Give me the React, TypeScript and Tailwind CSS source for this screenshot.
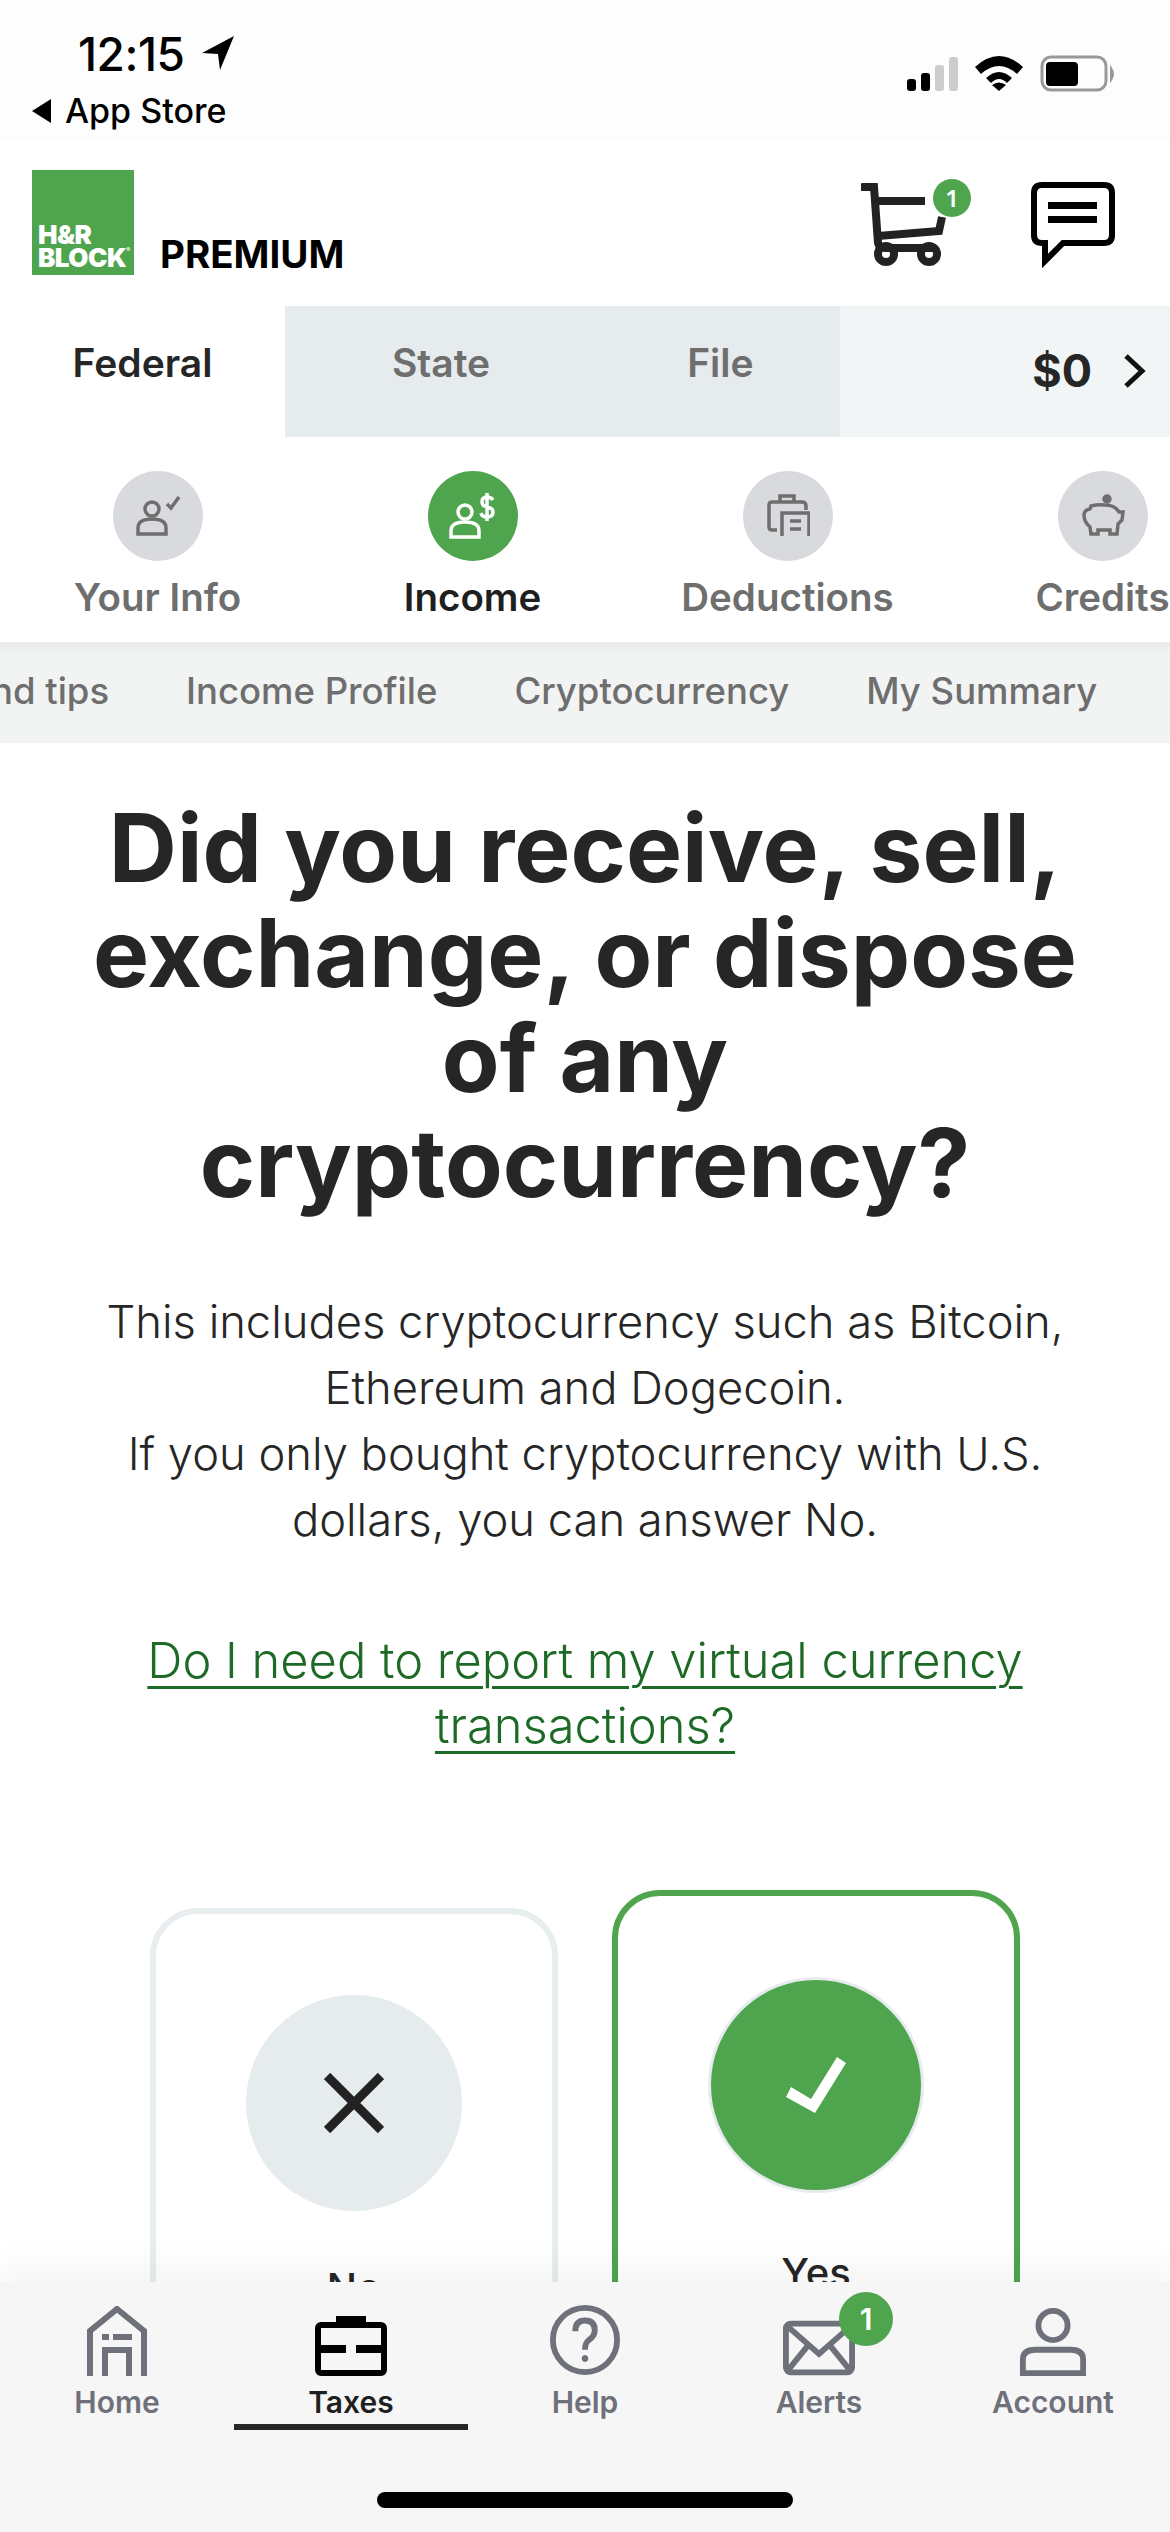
import { ReactNode } from 'react';

const Badge = ({ className }: { className: string }) => (
  <span className={`absolute flex items-center justify-center rounded-full bg-[#4ea54d] text-white font-semibold ${className}`}>1</span>
);

const StatusBar = () => (
  <div className="h-[140px] bg-[#fdfdfd] relative flex justify-between font-['Inter',sans-serif] text-black">
    <div className="pl-[30px] pt-[28px]">
      <div className="flex items-center pl-[48px] h-[52px]">
        <span className="text-[46px] leading-[52px] font-medium tracking-[-0.5px]">12:15</span>
        <svg width="34" height="36" viewBox="0 0 34 36" className="ml-[17px] -mt-[2px]">
          <path d="M33 1 L1 18 L17 19 L19 35 Z" fill="#000" />
        </svg>
      </div>
      <div className="flex items-center h-[36px] mt-[13px]">
        <svg width="22" height="24" viewBox="0 0 22 24">
          <path d="M21 0 V24 L2 12 Z" fill="#000" />
        </svg>
        <span className="ml-[13px] text-[34px] leading-[36px] font-medium">App Store</span>
      </div>
    </div>
    <div className="pt-[55px] pr-[53px]">
      <svg width="210" height="40" viewBox="0 0 210 40">
        <rect x="0" y="24" width="9" height="12" rx="3" fill="#000" />
        <rect x="14" y="18" width="9" height="18" rx="3" fill="#000" />
        <rect x="28" y="10" width="9" height="26" rx="3" fill="#ccc" />
        <rect x="42" y="2" width="9" height="34" rx="3" fill="#ccc" />
        <path d="M68 12 Q92 -10 116 12 L110 19 Q92 3 74 19 Z" fill="#000" />
        <path d="M79 23 Q92 11 105 23 L100 28 Q92 20 84 28 Z" fill="#000" />
        <path d="M85 30 Q92 25 99 30 L92 36 Z" fill="#000" />
        <rect x="135" y="2" width="64" height="33" rx="9" fill="none" stroke="#999" strokeWidth="3" />
        <rect x="139" y="7" width="32" height="24" rx="4" fill="#000" />
        <path d="M204 13 Q208 19 204 25 Z" fill="#999" stroke="#999" strokeWidth="2" />
      </svg>
    </div>
  </div>
);

const Header = () => (
  <div className="h-[166px] flex justify-between bg-white">
    <div className="flex items-end pl-[32px] pb-[31px]">
      <div className="w-[102px] h-[105px] bg-[#4ea54d] flex flex-col justify-end pl-[6px] pb-[6px] font-['Inter',sans-serif] font-black text-white text-[26px] leading-[23px] tracking-[-0.5px]">
        <span>H&amp;R</span>
        <span className="flex items-start">
          BLOCK<span className="text-[6px] leading-[8px]">®</span>
        </span>
      </div>
      <span className="ml-[26px] mb-[2px] font-['Inter',sans-serif] font-bold text-[38.5px] leading-[38px] text-black">PREMIUM</span>
    </div>
    <div className="flex pt-[41px] pr-[55px]">
      <div className="relative w-[92px] h-[90px] mr-[78px]">
        <svg width="92" height="90" viewBox="0 0 92 90" fill="none" stroke="#222" strokeWidth="8">
          <path d="M2 6 H13 L17 62 Q18 67 24 67 H72" strokeLinecap="round" />
          <path d="M15 20 H64" />
          <path d="M17 55 L78 50 L81 36" />
          <circle cx="25" cy="73" r="8" />
          <circle cx="68" cy="73" r="8" />
        </svg>
        <Badge className="-top-[2px] left-[72px] w-[38px] h-[38px] text-[24px]" />
      </div>
      <svg width="84" height="86" viewBox="0 0 84 86" fill="none" className="mt-[1px]">
        <path d="M11 3 H73 Q81 3 81 11 V53 Q81 61 73 61 H32 L14 79 V61 H11 Q3 61 3 53 V11 Q3 3 11 3 Z" stroke="#000" strokeWidth="6" />
        <rect x="17" y="20" width="49" height="7" fill="#000" />
        <rect x="17" y="34" width="49" height="7" fill="#000" />
      </svg>
    </div>
  </div>
);

const TopTabs = () => (
  <div className="h-[131px] flex font-['Inter',sans-serif] font-semibold text-[39px] leading-[54px]">
    <div className="w-[285px] bg-white flex justify-center pt-[30px] text-[#262626]">Federal</div>
    <div className="w-[555px] bg-[#e6ebed] flex pt-[30px] text-[#6e6e6e]">
      <span className="ml-[107px]">State</span>
      <span className="ml-[197px]">File</span>
    </div>
    <div className="flex-1 bg-[#f2f5f6] flex items-center justify-end pr-[24px] pb-[2px] text-[#262626] text-[45px] font-bold">
      <span>$0</span>
      <svg width="24" height="36" viewBox="0 0 24 36" className="ml-[30px]" fill="none" stroke="#111" strokeWidth="5">
        <path d="M4 3 L20 18 L4 33" />
      </svg>
    </div>
  </div>
);

const Step = ({ label, active, icon }: { label: string; active?: boolean; icon: ReactNode }) => (
  <div className="w-[315px] shrink-0 flex flex-col items-center">
    <div className={`w-[90px] h-[90px] rounded-full flex items-center justify-center ${active ? 'bg-[#4ea54d]' : 'bg-[#d8dade]'}`}>{icon}</div>
    <span className={`mt-[13px] whitespace-nowrap text-[38.5px] leading-[46px] font-semibold ${active ? 'text-[#1f1f1f]' : 'text-[#6e6e6e]'}`}>{label}</span>
  </div>
);

const Steps = () => (
  <div className="h-[205px] pt-[34px] overflow-hidden flex font-['Inter',sans-serif] bg-white">
    <Step
      label="Your Info"
      icon={
        <svg width="46" height="44" viewBox="0 0 46 44" fill="none" stroke="#6e6e6e" strokeWidth="3.5">
          <circle cx="17" cy="15" r="7" />
          <path d="M3 40 V34 Q3 25 17 25 Q31 25 31 34 V40 Z" />
          <path d="M32 10 L36 14 L44 3" />
        </svg>
      }
    />
    <Step
      label="Income"
      active
      icon={
        <svg width="48" height="46" viewBox="0 0 48 46" fill="none" stroke="#fff" strokeWidth="3.5">
          <circle cx="16" cy="19" r="7" />
          <path d="M2 44 V38 Q2 29 16 29 Q30 29 30 38 V44 Z" />
          <path d="M44 7 Q42 4 38 4 Q33 4 33 9 Q33 13 38 14 Q44 15 44 19 Q44 24 38 24 Q33 24 32 20 M38 0 V28" />
        </svg>
      }
    />
    <Step
      label="Deductions"
      icon={
        <svg width="44" height="44" viewBox="0 0 44 44" fill="none" stroke="#6e6e6e" strokeWidth="3.5">
          <path d="M14 8 V2 H28 V8 M11 36 H6 Q3 36 3 33 V11 Q3 8 6 8 H36 Q40 8 40 12 V16" />
          <path d="M16 42 V19 H43 V42" />
          <path d="M24 27 H35 M24 35 H35" />
        </svg>
      }
    />
    <Step
      label="Credits"
      icon={
        <svg width="44" height="44" viewBox="0 0 44 44" fill="none" stroke="#6e6e6e" strokeWidth="3.5">
          <circle cx="26" cy="5" r="3" fill="#6e6e6e" />
          <path d="M10 12 Q18 10 24 11 Q34 11 38 18 L42 18 L41 26 L37 30 L36 40 H29 V36 H17 V40 H10 L9 33 Q3 28 3 21 Q3 16 9 15 Z" />
        </svg>
      }
    />
  </div>
);

const SubNav = () => (
  <div className="h-[101px] bg-gradient-to-b from-[#e9ebeb] to-[#f2f4f4] to-[12%] flex items-center gap-[77px] overflow-hidden font-['Inter',sans-serif] font-medium text-[36.5px] text-[#6e6e6e] whitespace-nowrap pb-[2px]">
    <span className="-ml-[9px]">nd tips</span>
    <span>Income Profile</span>
    <span>Cryptocurrency</span>
    <span>My Summary</span>
  </div>
);

const Question = () => (
  <div className="font-['Inter',sans-serif] text-center text-[#262626]">
    <h1 className="mt-[53px] px-[80px] text-[94.3px] leading-[105px] font-bold">
      Did you receive, sell, exchange, or dispose of any cryptocurrency?
    </h1>
    <p className="mt-[73px] text-[45.3px] leading-[66px] font-light px-[60px]">
      This includes cryptocurrency such as Bitcoin,
      <br />
      Ethereum and Dogecoin.
      <br />
      If you only bought cryptocurrency with U.S.
      <br />
      dollars, you can answer No.
    </p>
    <p className="mt-[75px] text-[48.8px] leading-[65px] font-light text-[#1d6a26] underline underline-offset-[8px] decoration-[3px]">
      Do I need to report my virtual currency
      <br />
      transactions?
    </p>
  </div>
);

const Cards = () => (
  <div className="mt-[132px] flex justify-center gap-[54px] font-['Inter',sans-serif] text-[40px] text-[#262626]">
    <div className="mt-[18px] w-[408px] h-[420px] rounded-[48px] border-[6px] border-[#e8edef] flex flex-col items-center pt-[81px]">
      <div className="w-[216px] h-[216px] rounded-full bg-[#e6ebed] flex items-center justify-center">
        <svg width="60" height="60" viewBox="0 0 60 60" stroke="#222" strokeWidth="9">
          <path d="M3 3 L57 57 M57 3 L3 57" />
        </svg>
      </div>
      <span className="mt-[47px] font-medium">No</span>
    </div>
    <div className="w-[408px] h-[438px] rounded-[48px] border-[6px] border-[#4ea54d] flex flex-col items-center pt-[81px]">
      <div className="w-[216px] h-[216px] rounded-full bg-[#4ea54d] border-[3px] border-[#e6ebed] flex items-center justify-center">
        <svg width="60" height="56" viewBox="0 0 60 56" fill="#fff">
          <path d="M51 0 L60 6 L29 56 L0 40 L5 30 L25 42 Z" />
        </svg>
      </div>
      <span className="mt-[50px] font-medium">Yes</span>
    </div>
  </div>
);

const NavItem = ({ label, active, icon }: { label: string; active?: boolean; icon: ReactNode }) => (
  <div className={`w-[234px] flex flex-col items-center relative ${active ? 'text-[#1f1f1f]' : 'text-[#6f717a]'}`}>
    <div className="h-[70px] flex items-end">{icon}</div>
    <span className="mt-[9px] text-[30px] leading-[34px] font-semibold">{label}</span>
    {active ? <div className="absolute top-[118px] w-full h-[6px] bg-[#262626]" /> : null}
  </div>
);

const BottomNav = () => (
  <div className="absolute left-0 right-0 top-[2282px] h-[250px] bg-[#f6f6f6] shadow-[0_-20px_30px_rgba(0,0,0,0.04)] font-['Inter',sans-serif]">
    <div className="flex pt-[24px]">
      <NavItem
        label="Home"
        icon={
          <svg width="60" height="70" viewBox="0 0 60 70" fill="none" stroke="#6f717a" strokeWidth="6">
            <path d="M3 70 V25 L30 3 L57 25 V70" />
            <path d="M15 31 H22 M26 31 H45" strokeWidth="6" />
            <path d="M18 70 V44 H42 V70" />
          </svg>
        }
      />
      <NavItem
        label="Taxes"
        active
        icon={
          <svg width="72" height="60" viewBox="0 0 72 60" fill="none" stroke="#000" strokeWidth="6">
            <rect x="3" y="9" width="66" height="48" rx="3" />
            <path d="M3 33 H31 M41 33 H69" strokeWidth="8" />
            <path d="M24 8 V3 H48 V8" strokeWidth="6" />
          </svg>
        }
      />
      <NavItem
        label="Help"
        icon={
          <svg width="72" height="72" viewBox="0 0 74 74" fill="none" stroke="#6f717a" strokeWidth="6">
            <circle cx="37" cy="37" r="33" />
            <path d="M27 28 Q27 17 37 17 Q47 17 47 27 Q47 33 41 37 Q37 40 37 47" />
            <circle cx="37" cy="56" r="3" fill="#6f717a" strokeWidth="1" />
          </svg>
        }
      />
      <NavItem
        label="Alerts"
        icon={
          <svg width="72" height="56" viewBox="0 0 74 56" fill="none" stroke="#6f717a" strokeWidth="6">
            <rect x="3" y="3" width="68" height="50" rx="5" />
            <path d="M5 6 L37 34 L69 6 M5 51 L26 25 M69 51 L48 25" />
          </svg>
        }
      />
      <NavItem
        label="Account"
        icon={
          <svg width="68" height="68" viewBox="0 0 68 70" fill="none" stroke="#6f717a" strokeWidth="6">
            <circle cx="34" cy="18" r="15" />
            <path d="M3 67 V53 Q3 43 16 43 H52 Q65 43 65 53 V67 Z" />
          </svg>
        }
      />
    </div>
    <Badge className="top-[10px] left-[839px] w-[54px] h-[54px] text-[30px]" />
    <div className="absolute left-[377px] top-[210px] w-[416px] h-[16px] rounded-full bg-black" />
  </div>
);

export default function App() {
  return (
    <div className="relative w-[1170px] h-[2532px] overflow-hidden bg-white">
      <StatusBar />
      <Header />
      <TopTabs />
      <Steps />
      <SubNav />
      <Question />
      <Cards />
      <BottomNav />
    </div>
  );
}
